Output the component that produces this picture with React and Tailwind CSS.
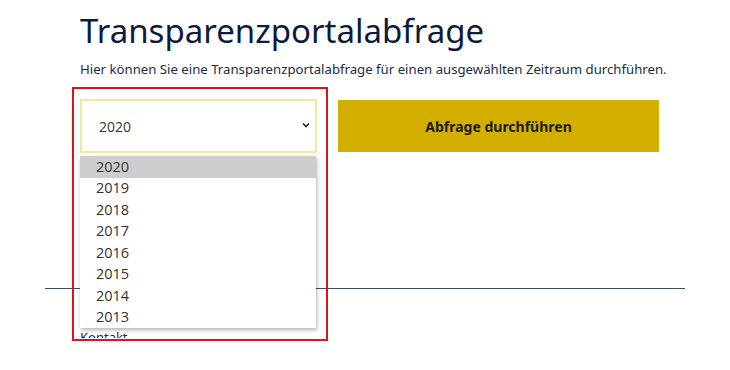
import React from "react";

const YEARS = ["2020", "2019", "2018", "2017", "2016", "2015", "2014", "2013"];

function YearSelect() {
  return (
    <div className="relative w-[237px] h-[54px] mt-[1px]">
      <div className="flex h-full items-center justify-between border-2 border-[#f4e7a6] bg-white pl-[17px] pr-[4px]">
        <span className="text-[14px] text-[#333]" style={{ fontFamily: '"Open Sans", sans-serif' }}>2020</span>
        <svg width="10" height="10" viewBox="0 0 10 10" className="mt-[-3px]">
          <path d="M2 3.5 L5 6.5 L8 3.5" fill="none" stroke="#222" strokeWidth="1.6" />
        </svg>
      </div>
      {/* offene Liste */}
      <ul
        className="absolute left-0 top-[57px] w-[236px] bg-white shadow-[1px_2px_4px_rgba(0,0,0,0.3)] z-10"
        style={{ fontFamily: '"Open Sans", sans-serif' }}
      >
        {YEARS.map((y, i) => (
          <li
            key={y}
            className={
              "h-[21.5px] flex items-center pl-[16px] text-[14.5px] text-[#333] " +
              (i === 0 ? "bg-[#cdcdcd] text-[#111]" : "")
            }
          >
            {y}
          </li>
        ))}
      </ul>
    </div>
  );
}

export default function App() {
  return (
    <div
      className="relative w-[730px] h-[370px] overflow-hidden bg-white"
      style={{ fontFamily: '"Noto Sans", sans-serif' }}
    >
      <div className="pl-[80px] pt-[8px]">
        <h1 className="text-[33px] leading-[46px] text-[#0c1b3d]">Transparenzportalabfrage</h1>
        <p className="mt-[5px] text-[13.2px] leading-[20px] text-[#1d2b49]">
          Hier können Sie eine Transparenzportalabfrage für einen ausgewählten Zeitraum durchführen.
        </p>
        <div className="mt-[19px] flex items-start gap-[21px]">
          <YearSelect />
          <button className="mt-[2px] h-[52px] w-[321px] bg-[#d3b000] text-[14px] font-bold text-[#1c1c1c]">
            Abfrage durchführen
          </button>
        </div>
      </div>
      <div className="mt-[135px] mx-[45px] border-t border-[#3b4c6b]" />
      <div className="mt-[40px] h-[9px] overflow-hidden pl-[80px]">
        <div className="text-[13px] leading-[16px] text-[#1d2b49]">Kontakt</div>
      </div>
      {/* Markierung */}
      <div className="absolute left-[72px] top-[87px] w-[256px] h-[254px] border-2 border-[#d5181e] pointer-events-none z-20" />
    </div>
  );
}
